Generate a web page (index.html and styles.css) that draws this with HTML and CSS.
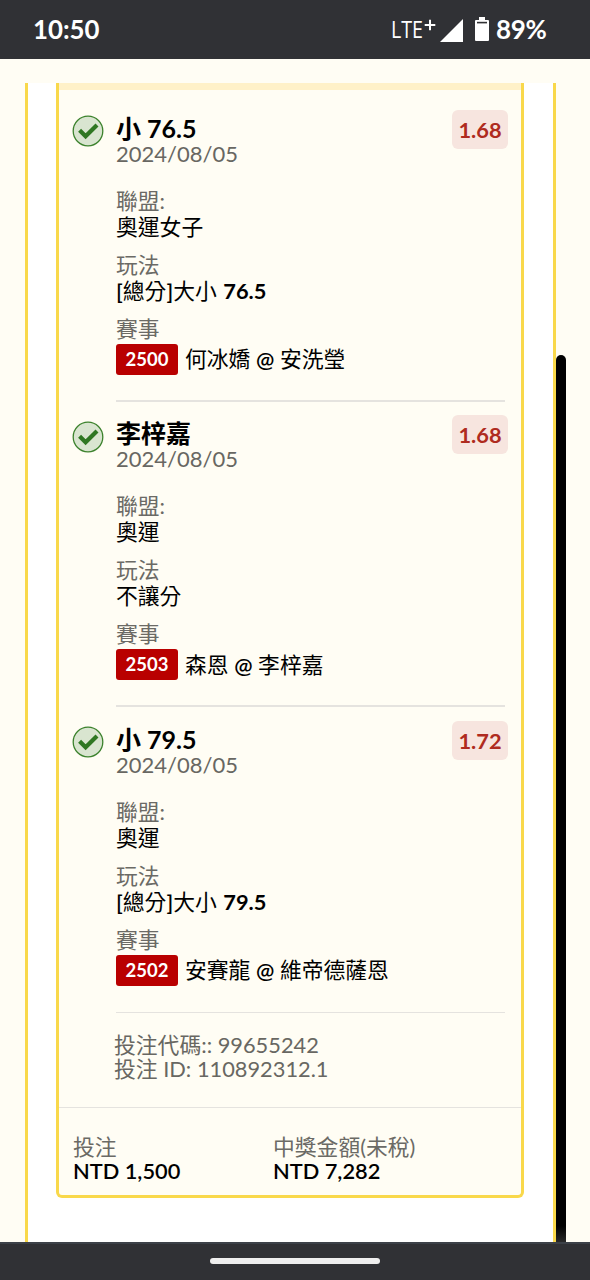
FILE: index.html
```html
<!DOCTYPE html>
<html lang="zh-Hant">
<head>
<meta charset="utf-8">
<title>投注紀錄</title>
<link rel="stylesheet" href="styles.css">
</head>
<body>
<header class="status">
  <span class="clock">10:50</span>
  <div class="indicators">
    <span class="network">LTE</span>
    <svg class="plus" width="12" height="12" viewBox="0 0 12 12"><path d="M6 .7v10.6M.7 6h10.6" stroke="#fff" stroke-width="2"/></svg>
    <svg class="signal" width="23" height="23" viewBox="0 0 23 23"><path d="M23 0v23H0z" fill="#fff"/></svg>
    <svg class="battery" width="14" height="24" viewBox="0 0 14 24"><path d="M4 0h6v3h3q1 0 1 1v19q0 1-1 1H1q-1 0-1-1V4q0-1 1-1h3z" fill="#fff"/><path d="M2 5.6h10" stroke="#303134" stroke-width="1.6"/></svg>
    <span class="percent">89%</span>
  </div>
</header>
<main class="page">
  <div class="panel">
    <section class="ticket">
      <article class="bet">
        <svg class="check" viewBox="0 0 32 32"><circle cx="16" cy="16" r="14.8"/><path d="M7.6 15.3l6 6L25 9.9"/></svg>
        <div class="detail">
          <h2>小 76.5</h2><p class="date">2024/08/05</p>
          <dl><dt>聯盟:</dt><dd>奧運女子</dd><dt>玩法</dt><dd><i>[</i>總分<i>]</i>大小 <b>76.5</b></dd><dt>賽事</dt><dd class="match"><span class="code">2500</span><span>何冰嬌 <i>@</i> 安洗瑩</span></dd></dl>
        </div>
        <span class="odds">1.68</span>
      </article>
      <article class="bet">
        <svg class="check" viewBox="0 0 32 32"><circle cx="16" cy="16" r="14.8"/><path d="M7.6 15.3l6 6L25 9.9"/></svg>
        <div class="detail">
          <h2>李梓嘉</h2><p class="date">2024/08/05</p>
          <dl><dt>聯盟:</dt><dd>奧運</dd><dt>玩法</dt><dd>不讓分</dd><dt>賽事</dt><dd class="match"><span class="code">2503</span><span>森恩 <i>@</i> 李梓嘉</span></dd></dl>
        </div>
        <span class="odds">1.68</span>
      </article>
      <article class="bet last">
        <svg class="check" viewBox="0 0 32 32"><circle cx="16" cy="16" r="14.8"/><path d="M7.6 15.3l6 6L25 9.9"/></svg>
        <div class="detail">
          <h2>小 79.5</h2><p class="date">2024/08/05</p>
          <dl><dt>聯盟:</dt><dd>奧運</dd><dt>玩法</dt><dd><i>[</i>總分<i>]</i>大小 <b>79.5</b></dd><dt>賽事</dt><dd class="match"><span class="code">2502</span><span>安賽龍 <i>@</i> 維帝德薩恩</span></dd></dl>
        </div>
        <span class="odds">1.72</span>
      </article>
      <div class="reference"><p>投注代碼:: 99655242</p><p>投注 ID: 110892312.1</p></div>
      <footer class="totals">
        <div><p>投注</p><strong>NTD 1,500</strong></div>
        <div><p>中獎金額(未稅)</p><strong>NTD 7,282</strong></div>
      </footer>
    </section>
  </div>
  <div class="scrollbar"></div>
</main>
<nav class="gesture"><span></span></nav>
</body>
</html>
```
FILE: styles.css
```css
* { box-sizing: border-box; }
body { margin: 0; width: 590px; height: 1280px; overflow: hidden; display: flex; flex-direction: column; background: #fffdf4; color: #000; font: 21.8px/26px Lato, "Noto Sans CJK TC", sans-serif; }
h2, p, dl, dd { margin: 0; }
.status { flex: 0 0 59px; background: #303135; color: #fff; display: flex; justify-content: space-between; padding: 0 43px 2px 33px; align-items: center; }
.clock { font-size: 25.8px; font-weight: 700; }
.indicators { display: flex; height: 57px; align-items: center; }
.network { font: 24px/30px "Open Sans", sans-serif; width: 31px; transform: scaleX(.82); transform-origin: left; }
.plus { margin: -8px 4px 0 2px; }
.signal { margin: 4px 12px 0 0; }
.battery { margin: 1px 7px 0 0; }
.percent { font-size: 26px; font-weight: 700; width: 51px; letter-spacing: -.3px; }
.page { flex: 1; min-height: 0; padding: 23.5px 34px 0 25px; position: relative; }
.panel { height: 100%; background: #fff; border: solid #f9d84a; border-width: 0 3px; padding: 0 29px 0 28px; }
.ticket { height: 1115px; background: #fffdf4; border: 3px solid #f9d84a; border-top: 0; border-radius: 0 0 6px 6px; }
.ticket::before { content: ""; display: block; height: 7px; background: #fff1c8; margin-bottom: 6.5px; }
.bet { display: grid; grid-template-columns: 44px 1fr; height: 305.7px; margin: 0 16px 0 13px; position: relative; }
.check { width: 32px; height: 32px; margin-top: 19px; }
.check circle { fill: #d9e5d0; stroke: #3c822d; stroke-width: 1.3; }
.check path { fill: none; stroke: #2f7722; stroke-width: 4.2; }
.detail { padding-top: 18.5px; border-bottom: 2px solid #e5e3df; }
.last .detail { border-bottom-width: 1px; }
h2 { font-size: 25px; line-height: 26px; font-weight: 700; }
.date { color: #686762; font-size: 22px; line-height: 26px; margin-bottom: 21px; }
dt { color: #6b6a65; line-height: 26px; }
dd { line-height: 26px; margin-bottom: 12px; }
dd i { font-style: normal; font-weight: 600; }
dd b { margin-left: 1px; }
.match { display: flex; align-items: center; height: 32px; gap: 7px; margin-top: 1.5px; }
.code { width: 62px; height: 31px; border-radius: 3px; background: #b90000; color: #fff; font-size: 18.5px; font-weight: 700; line-height: 31px; text-align: center; }
.odds { position: absolute; top: 13.5px; right: -3px; width: 56px; height: 39px; border-radius: 6px; background: #f7e5df; color: #af2b20; font-weight: 700; line-height: 39px; text-align: center; }
.reference { height: 95px; padding: 20px 0 0 55px; line-height: 23.8px; color: #686762; border-bottom: 1px solid #e5e3df; }
.totals { display: grid; grid-template-columns: 200px 1fr; padding: 26.5px 14px 0; line-height: 24px; }
.totals p { color: #6b6a65; }
.totals strong { display: block; font-weight: 600; }
.scrollbar { position: absolute; left: 556px; top: 296px; bottom: 0; width: 10px; background: linear-gradient(#000 calc(100% - 16px), #292929); border-radius: 5px 5px 0 0; }
.gesture { flex: 0 0 38px; background: #303135; border-top: 2px solid #3c4148; display: flex; justify-content: center; padding-top: 14px; }
.gesture span { width: 170px; height: 6px; border-radius: 3px; background: #eee; }
```
